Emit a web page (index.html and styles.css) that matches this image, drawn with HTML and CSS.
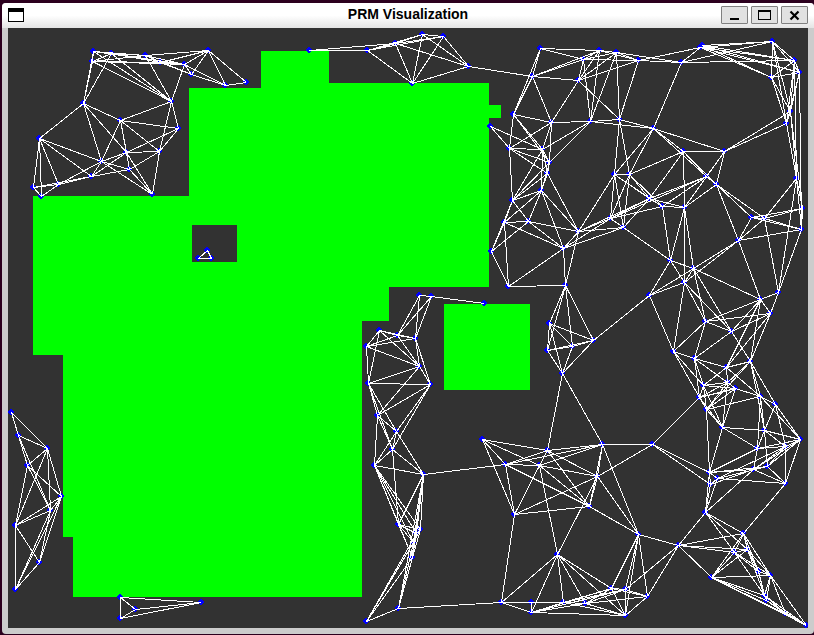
FILE: index.html
```html
<!DOCTYPE html>
<html lang="en">
<head>
<meta charset="utf-8">
<title>PRM Visualization</title>
<link rel="stylesheet" href="styles.css">
</head>
<body>
<main class="window">
  <header class="titlebar">
    <div class="side">
      <svg class="app-icon" width="16" height="14" viewBox="0 0 16 14" aria-hidden="true"><rect width="16" height="14"/><rect x="1" y="4" width="14" height="9" fill="#fff"/></svg>
    </div>
    <h1 class="title">PRM Visualization</h1>
    <div class="side controls">
      <button class="control" type="button" aria-label="Minimize"><svg width="25" height="16" viewBox="0 0 25 16"><rect x="8" y="11" width="9" height="2"/></svg></button>
      <button class="control" type="button" aria-label="Maximize"><svg width="25" height="16" viewBox="0 0 25 16"><path fill-rule="evenodd" d="M6 3h13v10H6zM7 5v7h11V5z"/></svg></button>
      <button class="control" type="button" aria-label="Close"><svg width="25" height="16" viewBox="0 0 25 16"><path d="M8.500 4.500l8 8m0-8l-8 8" fill="none" stroke="#000" stroke-width="2.200"/></svg></button>
    </div>
  </header>
  <svg class="map" viewBox="8 28 800 600" role="img" aria-label="Probabilistic roadmap" shape-rendering="crispEdges">
    <path class="obstacle" fill-rule="evenodd" d="M261 51H329V83H489V105H501V118H489V287H389V321H362V597H73V537H63V355H33V196H189V88H261ZM192 225V262H237V225Z"/>
    <path class="obstacle" d="M444 304H530V390H444Z"/>
    <g id="nodes" class="nodes"></g>
    <path id="edges" class="edges"/>
  </svg>
</main>
<script src="roadmap.js"></script>
</body>
</html>
```
FILE: styles.css
```css
* { box-sizing: border-box; }
body {
  margin: 0;
  padding: 3px 0 1px 2px;
  background: #2c001e;
  font-family: "Liberation Sans", Arial, sans-serif;
}
.window {
  padding: 0 6px 6px;
  background: #ccc;
  border-radius: 4px;
  overflow: hidden;
}
.titlebar {
  display: flex;
  align-items: center;
  height: 25px;
  margin: 0 -6px;
  padding: 0 6px 1px;
  background: linear-gradient(#fff 50%, #e4e4e4);
}
.side {
  display: flex;
  flex: 1;
}
.controls {
  justify-content: flex-end;
  gap: 3px;
}
.title {
  margin: 0;
  padding-bottom: 2px;
  font-size: 14px;
  line-height: 16px;
  font-weight: bold;
  color: #000;
}
.control {
  display: block;
  padding: 0;
  border: 1px solid #808080;
  border-radius: 1px;
  background: #e1e1e1;
}
.control svg { display: block; }
.map {
  display: block;
  width: 100%;
  height: auto;
  background: #323232;
}
.obstacle { fill: #0f0; }
.nodes { fill: #00f; }
.edges {
  fill: none;
  stroke: #fff;
  stroke-width: 1;
}
```
FILE: roadmap.js
```js
// Sampled configurations, grouped by region; ids are the group letter plus a 1-based index.
const samples = {
  a: [[93,51],[92,61],[111,53],[145,55],[160,62],[184,64],[191,74],[208,50],[225,85],[246,82],[83,103],[171,101],[120,120],[178,128],[159,151],[126,152],[129,169],[101,161],[91,176],[58,184],[39,138],[33,187],[41,196],[152,194]],
  b: [[198,258],[207,250],[211,258]],
  c: [[309,50],[367,50],[395,43],[422,34],[443,36],[468,66],[412,83]],
  d: [[540,48],[532,76],[583,59],[599,50],[616,52],[638,60],[578,80],[513,114],[551,122],[590,121],[619,119],[653,128],[490,126],[509,148],[542,149],[549,162],[547,173],[614,174],[629,174],[541,190],[512,200],[504,222],[528,221],[491,251],[508,286],[578,231],[563,248],[565,285],[610,218],[623,227],[649,295],[549,323],[547,350],[572,346],[593,340],[562,373]],
  e: [[683,151],[724,151],[706,176],[716,184],[649,198],[662,206],[684,207],[751,217],[764,218],[738,240],[802,208],[801,229],[796,178],[670,260],[693,268],[684,282],[649,295],[778,292],[760,299],[770,313]],
  f: [[700,47],[772,41],[794,60],[799,72],[771,77],[790,111],[786,123],[681,62],[702,45]],
  g: [[705,321],[731,331],[770,313],[673,351],[694,358],[726,367],[750,361],[727,382],[735,388],[703,385],[699,397],[706,409],[722,427],[760,396],[775,404],[764,430],[757,448],[785,446],[800,439],[767,466],[753,469],[709,472],[717,478],[710,484],[785,483]],
  i: [[705,512],[743,533],[678,545],[734,552],[747,549],[711,577],[758,571],[770,575],[764,595],[766,600],[785,613],[806,625]],
  j: [[482,439],[547,450],[602,444],[652,444],[505,464],[539,465],[597,476],[514,514],[589,506],[638,534],[557,554],[501,602],[531,602],[531,612],[563,602],[585,603],[611,588],[625,589],[647,596],[625,615]],
  k: [[419,295],[431,296],[484,303],[379,330],[397,335],[415,338],[366,346],[419,366],[368,383],[430,384],[377,415],[396,431],[392,449],[374,465],[423,474],[398,524],[420,529],[416,533],[413,542],[412,557],[398,608],[366,621]],
  l: [[11,412],[18,435],[47,448],[27,465],[61,496],[50,510],[15,525],[39,562],[15,589]],
  m: [[120,597],[135,609],[120,618],[201,602]]
};

// Each entry lists one node followed by the nodes it connects to.
const links = `
a1 a2 a3 a4 a6 a11 a12|a2 a3 a4 a5 a6 a11 a12|a3 a4 a5 a6 a11 a12|a4 a6 a7 a8 a12|a5 a6 a7 a8|a6 a7 a8 a9 a12|a7 a8 a9|a8 a9 a10|a9 a10
a11 a13 a16 a18 a21|a12 a13 a14 a15|a13 a14 a15 a16 a17 a18|a14 a15 a16|a15 a16 a17 a24|a16 a17 a18 a19 a24|a17 a18 a19 a24
a18 a19 a20 a21 a24|a19 a20 a21 a22|a20 a21 a22 a23|a21 a22 a23|a22 a23
b1 b2 b3|b2 b3
c1 c2 c3|c2 c3 c4 c5 c7|c3 c4 c5 c6 c7|c4 c5 c6 c7|c5 c6 c7|c6 c7 d2
d1 d2 d3 d4 d8|d2 d3 d4 d7 d8 d9|d3 d4 d5 d6 d7 d10|d4 d5 d6 d7 d10|d5 d6 d7 d10 d11 f8|d6 d7 d11 f8 f1|d7 d9 d11
d8 d9 d14 d15 d16|d9 d10 d14 d15 d16|d10 d11 d12 d15 d16|d11 d12 d18 d19|d12 d18 d19 f8 e1 e2 e3|d13 d14 d15
d14 d15 d16 d17 d21|d15 d16 d17 d20 d21|d16 d17 d20 d21|d17 d20 d21 d26|d18 d19 d26 d29 d30 e5 e6|d19 d29 d30 e1 e5 e6
d20 d21 d22 d23 d26 d27|d21 d22 d23 d24|d22 d23 d24 d25 d27|d23 d24 d26 d27|d24 d25|d25 d27 d28|d26 d27 d28 d29 d30 e5
d27 d28 d29 d30|d28 d32 d33 d34 d35|d29 d30 e3 e5 e6|d30 e5 e14|d31 d35|d32 d33 d34 d35 d36|d33 d34 d35 d36|d34 d35 d36|d35 d36|d36 j2 j3
e1 e2 e3 e4 e5 e7|e2 e3 e4 e7 f6 f7|e3 e4 e5 e6|e4 e7 e8 e9 e10|e5 e6 e7|e6 e7 e14|e7 e14 e15 e16
e8 e9 e10 e12|e9 e10 e11 e12 e13 e18|e10 e12 e15 e16 e19|e11 e8 e12 e13|e12 e13 e18|e13 e18
e14 e15 e16 e17|e15 e16 e17 e19 g1 g2|e16 e17 g1 g2 g4|e17 g4|e18 e19 e20|e19 e20 g1 g2 g6 g7|e20 g1 g2 g6 g7
f1 f2 f3 f4 f5 f8|f9 f2 f3 f4 f5|f2 f3 f4 f5 f6 f7 f8|f3 f4 f5 f6 f7 f8 e13|f4 f5 f6 f7 e12|f5 f6 f7|f6 f7 e13 e11|f7 e13
g1 g2 g4 g5|g2 g5 g7|g4 g5 g10 g11|g5 g6 g8 g9 g10 g11|g6 g7 g8 g10 g14|g7 g8 g12 g14 g15 g16|g8 g9 g10 g11 g12 g13
g9 g10 g11 g12 g13 g14|g10 g11 g12 g13|g11 g12 g13 j4|g12 g13 g14 g22|g13 g16 g17 g22|g14 g15 g16 g17 g19|g15 g16 g18 g19
g16 g17 g18 g19 g20|g17 g18 g19 g21 g22|g18 g19 g20 g21 g25|g19 g20 g21 g23 g25|g20 g21 g22 g23 g25|g21 g22 g24 g25 i1|g22 g23 g24 j4 i1|g23 g24 g25 i1|g24 j4 i1|g25 i2
i1 i2 i3 i4 i5|i2 i3 i4 i5 i6 i7 i8|i3 i4 i5 i6 j10 j18 j19|i4 i5 i6 i7 i8 i9|i5 i6 i7 i8 i9|i6 i8 i9 i10 i11 i12|i7 i8 i9|i8 i9 i10 i11 i12|i9 i10 i11 i12|i10 i11 i12|i11 i12
j1 j2 j5 j6 j8|j2 j3 j5 j6 j7 j9|j3 j4 j5 j6 j7 j9 j10|j4 j7|j5 j6 j8 j9 k15|j6 j7 j8 j9 j11|j7 j8 j9 j10 j11|j8 j9 j12|j9 j10
j10 j17 j18 j19 j20|j11 j12 j14 j15 j16 j17 j20|j12 j14 j15 k21|j13 j14|j14 j15 j16 j17 j18 j20|j15 j16 j17 j18 j20|j16 j17 j18 j19 j20|j17 j18 j19 j20|j18 j19 j20|j19 j20
k1 k2 k5 k6|k2 k3 k5 k6|k4 k5 k6 k7 k8 k9|k5 k6 k7 k8|k6 k7 k8 k10|k7 k8 k9|k8 k9 k10 k11|k9 k10 k11 k12 k13|k10 k11 k12 k13
k11 k12 k13 k14|k12 k13 k14 k15|k13 k14 k15 k16|k14 k15 k16 k17 k18 k19 k20|k15 k16 k17 k18 k19 k20 k21|k16 k17 k18 k19 k20|k17 k18 k19 k20|k18 k19 k20 k22|k19 k20 k21 k22|k20 k21 k22|k21 k22
l1 l2 l3 l4|l2 l3 l4 l6|l3 l4 l5 l6 l7|l4 l5 l6 l7|l5 l6 l7 l8 l9|l6 l7 l8 l9|l7 l8 l9|l8 l9
m1 m2 m3 m4|m2 m3 m4|m3 m4`;

const at = id => samples[id[0]][id.slice(1) - 1];

// Six-pixel round marker, one row at a time.
const marker = ([x, y]) => `M${x - 1} ${y - 3}h2v1h1v1h1v2h-1v1h-1v1h-2v-1h-1v-1h-1v-2h1v-1h1z`;
const nodes = document.createElementNS("http://www.w3.org/2000/svg", "path");
nodes.setAttribute("d", Object.values(samples).flat().map(marker).join(""));
document.getElementById("nodes").append(nodes);

const segments = links.trim().split(/[|\n]/).flatMap(entry => {
  const [from, ...targets] = entry.split(" ");
  const [x, y] = at(from);
  return targets.map(id => `M${x + 0.5} ${y + 0.5}L${at(id)[0] + 0.5} ${at(id)[1] + 0.5}`);
});
document.getElementById("edges").setAttribute("d", segments.join(""));
```
